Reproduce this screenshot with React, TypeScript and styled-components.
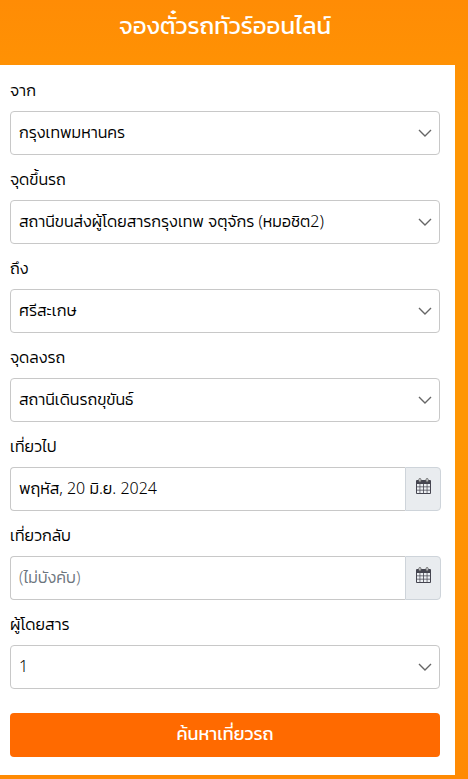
import React, { useId } from "react";
import styled, { createGlobalStyle } from "styled-components";

const GlobalStyle = createGlobalStyle`
  *, *::before, *::after { box-sizing: border-box; }
  body {
    margin: 0;
    font-family: "Noto Sans", Kanit, "Noto Sans Thai", sans-serif;
    font-weight: 300;
    font-size: 16px;
    color: #000;
    background: #ff9003;
  }
`;

const Page = styled.main`
  min-height: 100vh;
  padding: 0 13px 4px 0;
  background: linear-gradient(180deg, #ff8c05 0, #ff9603 120px, #ff9603 440px, #ff8a03 100%);
`;

const Title = styled.h1`
  margin: 0;
  padding: 7px 15px 22px 10px;
  font-size: 24px;
  font-weight: 400;
  line-height: 36px;
  text-align: center;
  color: #fff;
`;

const SearchForm = styled.form`
  display: flex;
  flex-direction: column;
  gap: 12px;
  padding: 13px 15px 18px 10px;
  background: #fff;
`;

const Field = styled.div`
  display: flex;
  flex-direction: column;
  gap: 9px;
`;

const Label = styled.label`
  line-height: 24px;
`;

const Control = styled.div`
  display: grid;
  align-items: center;

  > * { grid-area: 1 / 1; }
`;

const Select = styled.select`
  appearance: none;
  width: 100%;
  height: 44px;
  padding: 0 36px 3px 8px;
  border: 1px solid #c8c8c8;
  border-radius: 4px;
  background: #fff;
  color: #000;
  font: inherit;
  line-height: 32px;
`;

const Chevron = styled.svg`
  justify-self: end;
  width: 14px;
  height: 8px;
  margin-right: 8px;
  pointer-events: none;
`;

const InputGroup = styled.div`
  display: flex;
  margin-right: -1px;
`;

const DateInput = styled.input`
  flex: 1;
  min-width: 0;
  height: 44px;
  padding: 0 8px 2px;
  border: 1px solid #c8c8c8;
  border-right: 0;
  border-radius: 4px 0 0 4px;
  color: #000;
  font: inherit;

  &::placeholder { color: #6c757d; opacity: 1; }
`;

const CalendarButton = styled.button`
  display: flex;
  justify-content: center;
  width: 36px;
  padding: 10px 0 0;
  border: 1px solid #ced4da;
  border-radius: 0 4px 4px 0;
  background: #e9ecef;
`;

const SubmitButton = styled.button`
  height: 44px;
  margin-top: 12px;
  padding: 0 0 4px;
  border: 0;
  border-radius: 4px;
  background: #ff6a00;
  color: #fff;
  font: inherit;
  font-size: 18px;
  font-weight: 400;
`;

function CalendarIcon() {
  return (
    <svg width="15" height="16" viewBox="0 0 15 16" aria-hidden="true">
      <path d="M1 2h13a1 1 0 0 1 1 1v12a1 1 0 0 1-1 1H1a1 1 0 0 1-1-1V3a1 1 0 0 1 1-1Z" fill="#454550" />
      <path
        d="M1 6h2.6v2.5H1zM4.3 6h2.8v2.5H4.3zM7.9 6h2.8v2.5H7.9zM11.4 6H14v2.5h-2.6zM1 9.2h2.6v2.5H1zM4.3 9.2h2.8v2.5H4.3zM7.9 9.2h2.8v2.5H7.9zM11.4 9.2H14v2.5h-2.6zM1 12.4h2.6V15H1zM4.3 12.4h2.8V15H4.3zM7.9 12.4h2.8V15H7.9zM11.4 12.4H14V15h-2.6z"
        fill="#edf0f3"
      />
      <rect x="2.9" y="0.5" width="2" height="3.4" rx="1" fill="#e9ecef" stroke="#666" />
      <rect x="10.1" y="0.5" width="2" height="3.4" rx="1" fill="#e9ecef" stroke="#666" />
    </svg>
  );
}

function SelectField({ label, value }: { label: string; value: string }) {
  const id = useId();
  return (
    <Field>
      <Label htmlFor={id}>{label}</Label>
      <Control>
        <Select id={id} defaultValue={value}>
          <option value={value}>{value}</option>
        </Select>
        <Chevron viewBox="0 0 14 8" aria-hidden="true">
          <path d="M1 1l6 6 6-6" fill="none" stroke="#666" strokeWidth="1.4" />
        </Chevron>
      </Control>
    </Field>
  );
}

function DateField({ label, value, placeholder }: { label: string; value?: string; placeholder?: string }) {
  const id = useId();
  return (
    <Field>
      <Label htmlFor={id}>{label}</Label>
      <InputGroup>
        <DateInput id={id} type="text" defaultValue={value} placeholder={placeholder} />
        <CalendarButton type="button" aria-label={label}>
          <CalendarIcon />
        </CalendarButton>
      </InputGroup>
    </Field>
  );
}

export default function App() {
  return (
    <>
      <GlobalStyle />
      <Page>
        <Title>จองตั๋วรถทัวร์ออนไลน์</Title>
        <SearchForm onSubmit={(e) => e.preventDefault()}>
          <SelectField label="จาก" value="กรุงเทพมหานคร" />
          <SelectField label="จุดขึ้นรถ" value="สถานีขนส่งผู้โดยสารกรุงเทพ จตุจักร (หมอชิต2)" />
          <SelectField label="ถึง" value="ศรีสะเกษ" />
          <SelectField label="จุดลงรถ" value="สถานีเดินรถขุขันธ์" />
          <DateField label="เที่ยวไป" value="พฤหัส, 20 มิ.ย. 2024" />
          <DateField label="เที่ยวกลับ" placeholder="(ไม่บังคับ)" />
          <SelectField label="ผู้โดยสาร" value="1" />
          <SubmitButton type="submit">ค้นหาเที่ยวรถ</SubmitButton>
        </SearchForm>
      </Page>
    </>
  );
}
